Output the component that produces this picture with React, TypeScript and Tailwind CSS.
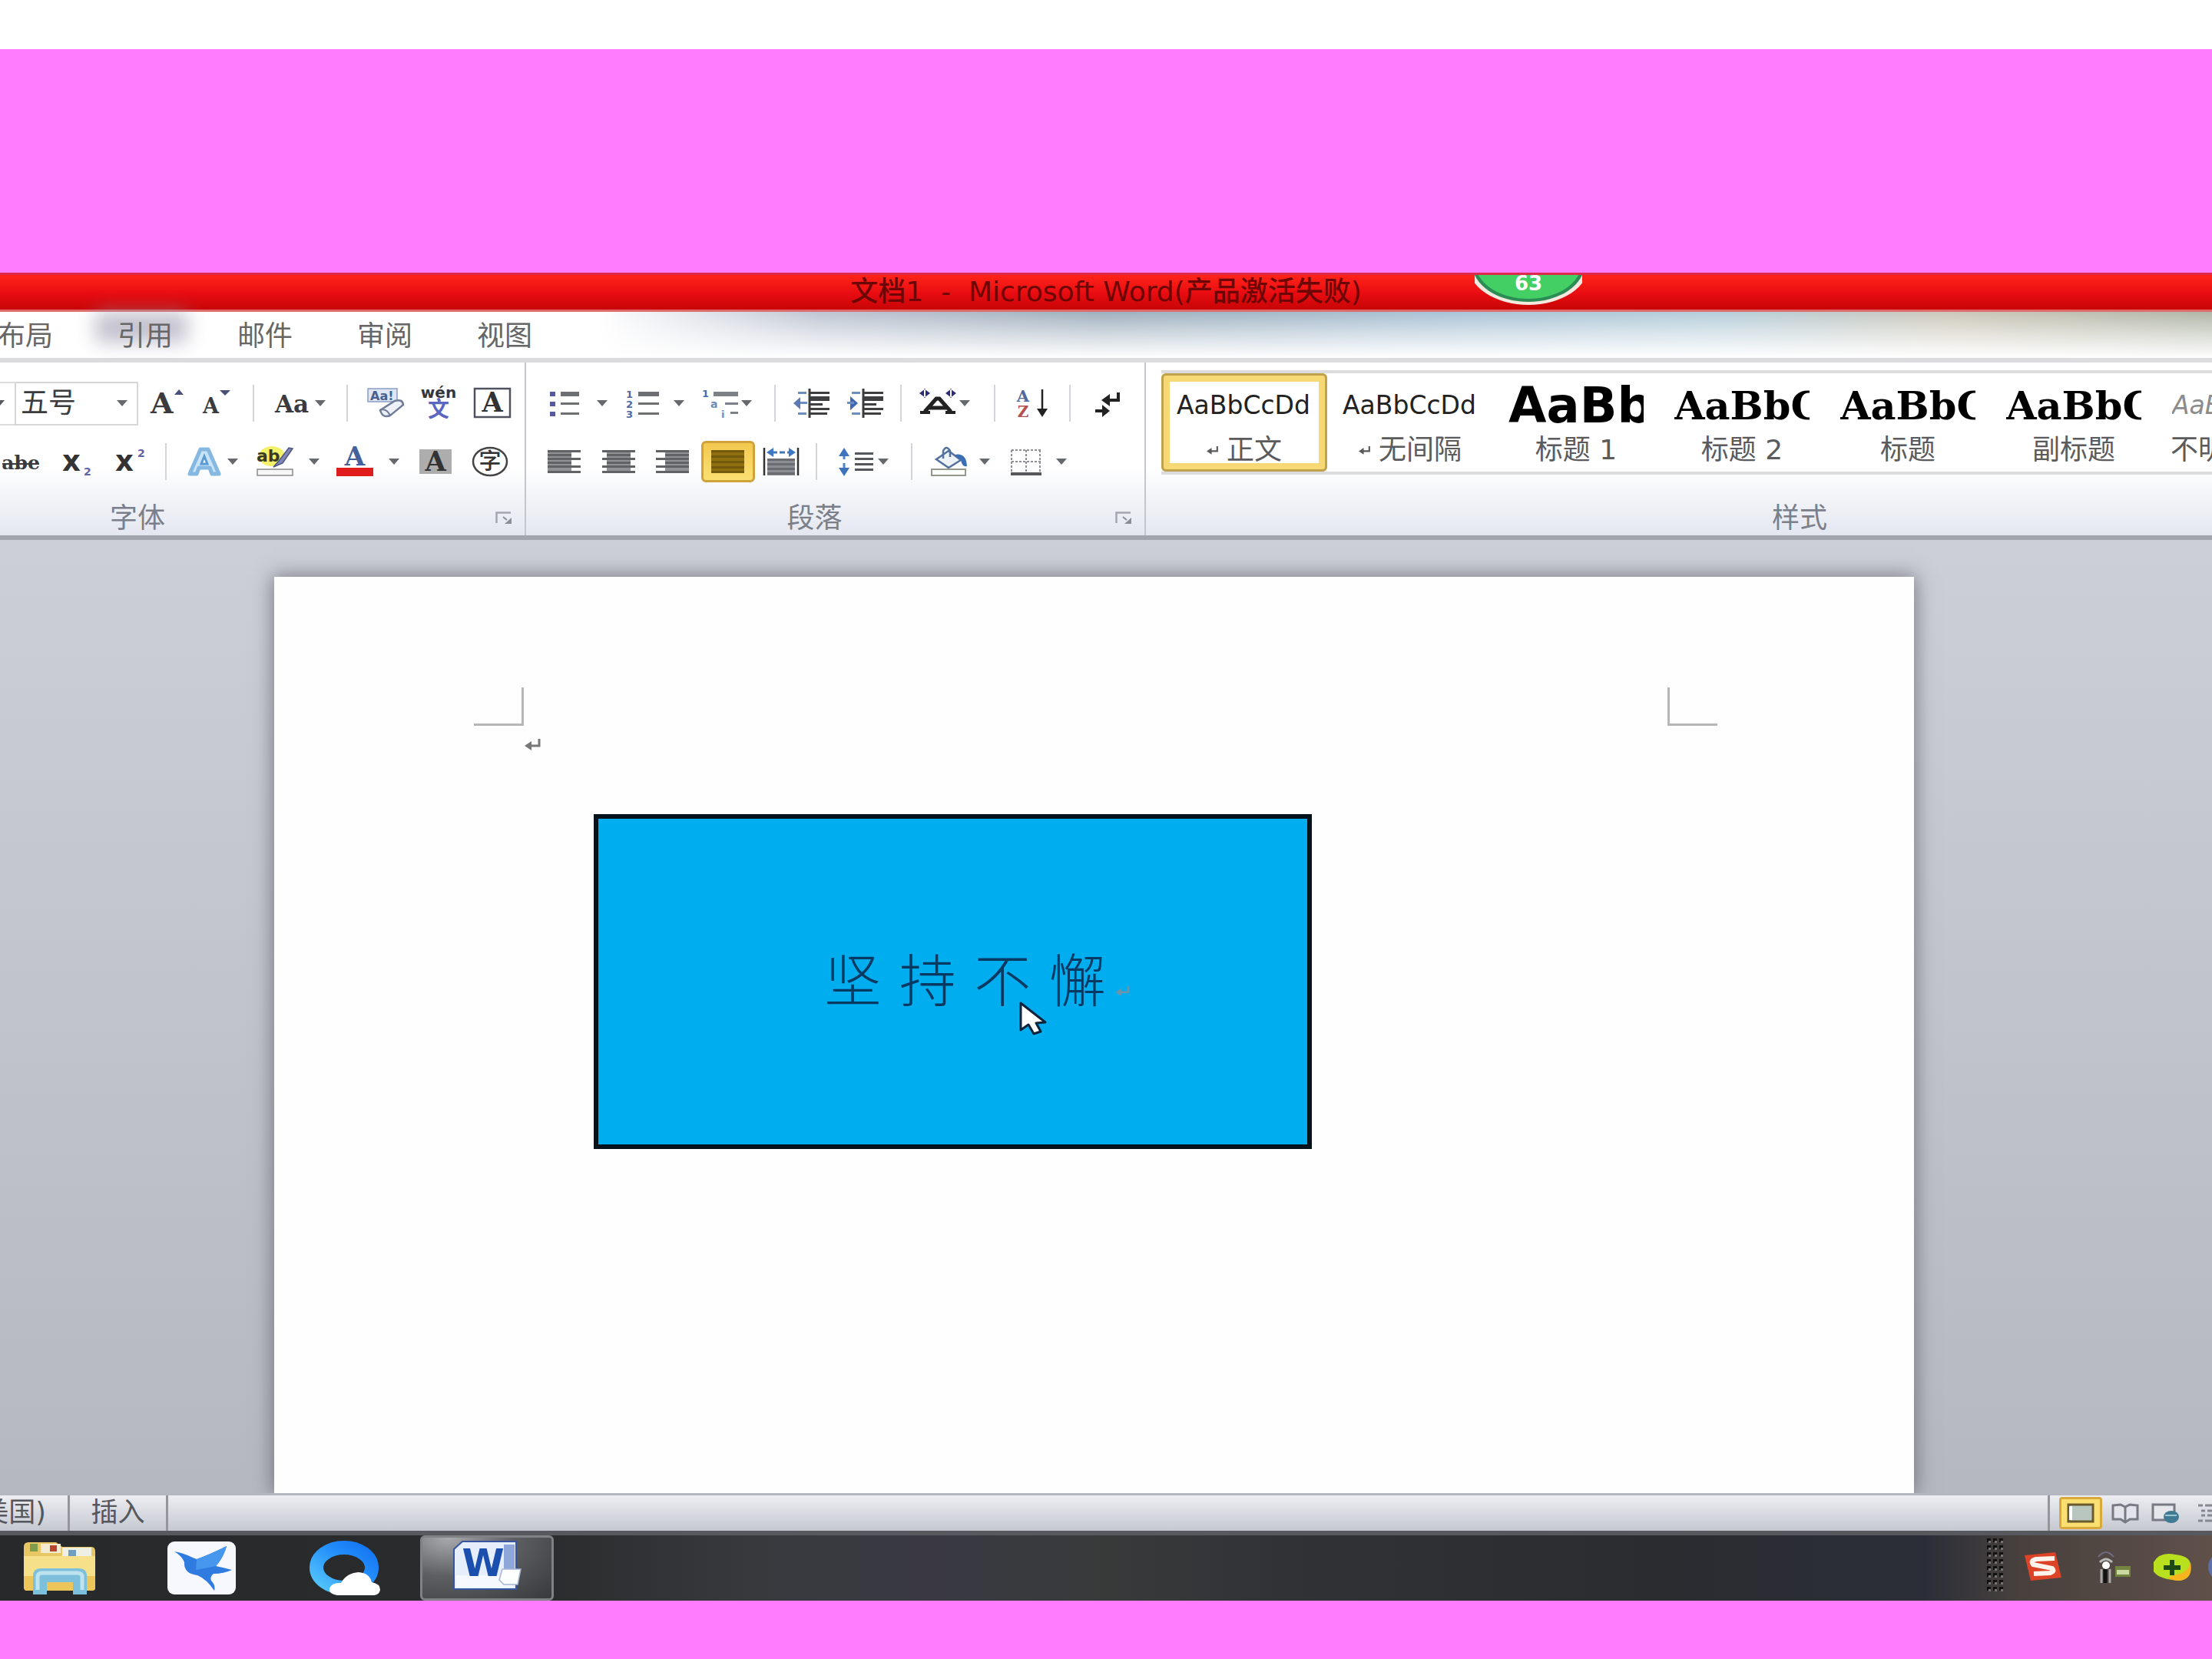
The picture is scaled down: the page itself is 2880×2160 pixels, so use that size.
import React from "react";

function classNames(...classes: (string | undefined | false)[]) {
  return classes.filter(Boolean).join(" ");
}

type IconProps = { children: React.ReactNode };

// all ribbon glyphs share the same 48x40 canvas
function Glyph({ children }: IconProps) {
  return (
    <svg viewBox="0 0 48 40" className="h-10 w-12 shrink-0 overflow-visible" aria-hidden={true}>
      {children}
    </svg>
  );
}

const serif = "'DejaVu Serif', serif";
const sans = "'DejaVu Sans', sans-serif";
const cjk = "'Noto Sans CJK SC', sans-serif";

function Caret() {
  return (
    <svg viewBox="0 0 14 8" className="h-2 w-3.5 shrink-0" aria-hidden={true}>
      <path d="M0 0H14L7 8Z" fill="#66696d" />
    </svg>
  );
}

function ReturnMark({ className }: { className: string }) {
  return (
    <svg viewBox="0 0 22 16" className={className} aria-hidden={true}>
      <path d="M19 1V10H6" fill="none" stroke="currentColor" strokeWidth="3" />
      <path d="M0 10L9 4V16Z" fill="currentColor" />
    </svg>
  );
}

function Sep() {
  return (
    <div className="flex w-6 shrink-0 justify-center">
      <div className="h-12 w-0.5 bg-[#d3d5da]" />
    </div>
  );
}

function Tool({
  label,
  className,
  menu,
  children,
}: {
  label: string;
  className: string;
  menu?: boolean;
  children: React.ReactNode;
}) {
  return (
    <button
      type="button"
      aria-label={label}
      className={classNames(
        "flex h-[54px] shrink-0 items-center",
        !menu && "justify-center",
        className,
      )}
    >
      <Glyph>{children}</Glyph>
      {menu && <Caret />}
    </button>
  );
}

function Lines({
  rows,
  color = "#77797c",
}: {
  rows: [number, number, number][];
  color?: string;
}) {
  return (
    <>
      {rows.map(([x, y, w]) => (
        <rect key={`${x}-${y}`} x={x} y={y} width={w} height="3" fill={color} />
      ))}
    </>
  );
}

function FontGroup() {
  return (
    <section className="flex w-[685px] shrink-0 flex-col border-r-2 border-[#c3c6cc] pt-[15px]">
      <div className="flex h-[76px] items-center">
        <div className="flex h-[57px] w-[19px] shrink-0 items-center border-y-2 border-[#dcdcde]">
          <svg viewBox="0 0 6 8" className="h-2 w-1.5" aria-hidden={true}>
            <path d="M0 0H6L0 7Z" fill="#55585c" />
          </svg>
        </div>
        <label className="relative block w-[161px] shrink-0">
          <select
            aria-label="字号"
            className="block h-[57px] w-full appearance-none border-2 border-[#d6d6d8] bg-white pl-1.5 text-[36px] leading-[50px] text-[#3c3c3c]"
          >
            <option>五号</option>
          </select>
          <span className="pointer-events-none absolute top-6 right-3.5">
            <Caret />
          </span>
        </label>
        <Tool label="增大字体" className="w-[74px]">
          <text x="3" y="33" fontFamily={serif} fontWeight="700" fontSize="38" fill="#3b3b3d">
            A
          </text>
          <path d="M34 9L40 2L46 9Z" fill="#4a5076" />
        </Tool>
        <Tool label="缩小字体" className="w-16">
          <text x="2" y="33" fontFamily={serif} fontWeight="700" fontSize="27" fill="#3b3b3d">
            A
          </text>
          <path d="M24 3H38L31 10Z" fill="#4a5076" />
        </Tool>
        <Sep />
        <Tool label="更改大小写" className="w-[98px] gap-1 pl-4" menu>
          <text x="0" y="32" fontFamily={serif} fontWeight="700" fontSize="31" fill="#3b3b3d">
            Aa
          </text>
        </Tool>
        <Sep />
        <Tool label="清除格式" className="w-[76px]">
          <path d="M1 1H39V18H1Z" fill="#dfe6f3" stroke="#8b9cc4" strokeWidth="1.5" />
          <text x="4" y="16" fontFamily={sans} fontWeight="700" fontSize="16" fill="#49608f">
            Aa!
          </text>
          <path
            d="M17 29L36 17Q46 14 47 22L30 36Q20 40 17 29Z"
            fill="#eef1f7"
            stroke="#707d99"
            strokeWidth="2.5"
          />
          <path d="M17 29Q25 26 30 36" fill="none" stroke="#707d99" strokeWidth="2" />
        </Tool>
        <Tool label="拼音指南" className="w-[62px]">
          <text x="24" y="13" textAnchor="middle" fontFamily={sans} fontWeight="700" fontSize="20" fill="#35353b">
            wén
          </text>
          <text x="24" y="38" textAnchor="middle" fontFamily={cjk} fontWeight="700" fontSize="28" fill="#5a66c0">
            文
          </text>
        </Tool>
        <Tool label="字符边框" className="w-[78px]">
          <rect x="1" y="1" width="46" height="37" fill="#fff" stroke="#50535f" strokeWidth="2.5" />
          <text x="24" y="31" textAnchor="middle" fontFamily={serif} fontWeight="700" fontSize="35" fill="#333">
            A
          </text>
        </Tool>
      </div>
      <div className="flex h-[76px] items-center">
        <Tool label="删除线" className="w-[54px]">
          <text x="24" y="30" textAnchor="middle" fontFamily={serif} fontWeight="700" fontSize="25" fill="#3b3b3d">
            abe
          </text>
          <path d="M0 23H48" stroke="#3b3b3d" strokeWidth="2" />
        </Tool>
        <Tool label="下标" className="w-[90px]">
          <text x="6" y="32" fontFamily={sans} fontWeight="700" fontSize="37" fill="#333">
            x
          </text>
          <text x="34" y="38" fontFamily={sans} fontWeight="700" fontSize="14" fill="#5c64a8">
            2
          </text>
        </Tool>
        <Tool label="上标" className="w-[60px]">
          <text x="0" y="32" fontFamily={sans} fontWeight="700" fontSize="37" fill="#333">
            x
          </text>
          <text x="29" y="14" fontFamily={sans} fontWeight="700" fontSize="14" fill="#5c64a8">
            2
          </text>
        </Tool>
        <Sep />
        <Tool label="文本效果" className="w-[90px] gap-1 pl-4" menu>
          <path
            d="M3 36L17 4H27L41 36H32L29 28H15L12 36Z"
            fill="#c9e4f8"
            stroke="#86b9e2"
            strokeWidth="5"
            strokeLinejoin="round"
          />
          <path d="M18 23L22 13L26 23Z" fill="#fff" stroke="#5b9bd3" strokeWidth="3" />
        </Tool>
        <Tool label="突出显示" className="w-26 gap-5 pl-4" menu>
          <ellipse cx="20" cy="13" rx="17" ry="13" fill="#f3f06a" />
          <text x="0" y="20" fontFamily={sans} fontWeight="700" fontSize="22" fill="#3a3a22">
            ab
          </text>
          <path d="M47 3L34 22L22 27L30 18L42 2Z" fill="#8087b4" stroke="#4f5682" strokeWidth="1.5" />
          <rect x="1" y="30" width="46" height="8" fill="#f7f7f7" stroke="#8b8b8b" strokeWidth="1.5" />
        </Tool>
        <Tool label="字体颜色" className="w-26 gap-5 pl-4" menu>
          <text x="24" y="25" textAnchor="middle" fontFamily={serif} fontWeight="700" fontSize="34" fill="#44619c">
            A
          </text>
          <rect x="0" y="28" width="48" height="11" fill="#e01c1c" />
        </Tool>
        <Tool label="字符底纹" className="w-20">
          <rect x="4" y="4" width="42" height="32" fill="#adadad" />
          <text x="25" y="32" textAnchor="middle" fontFamily={serif} fontWeight="700" fontSize="35" fill="#333">
            A
          </text>
        </Tool>
        <Tool label="带圈字符" className="w-16">
          <ellipse cx="24" cy="20" rx="22" ry="18" fill="#fff" stroke="#444" strokeWidth="2.5" />
          <text x="24" y="30" textAnchor="middle" fontFamily={cjk} fontWeight="500" fontSize="29" fill="#333">
            字
          </text>
        </Tool>
      </div>
      <GroupLabel text="字体" className="pl-[143px]" launcher />
    </section>
  );
}

function GroupLabel({
  text,
  className,
  launcher,
}: {
  text: string;
  className?: string;
  launcher?: boolean;
}) {
  return (
    <div
      className={classNames(
        "mt-3.5 flex h-[44px] items-center gap-4 text-[36px] leading-[44px] text-[#7b7f8a]",
        className,
      )}
    >
      <h2 className="flex-1">{text}</h2>
      {launcher && (
        <button type="button" aria-label={`${text}对话框`} className="mr-4">
          <svg viewBox="0 0 22 18" className="h-[18px] w-[22px]">
            <path d="M1.5 15V1.5H20" fill="none" stroke="#a3a6ae" strokeWidth="2.5" />
            <path d="M10 7L15 11" stroke="#8b8e96" strokeWidth="2" />
            <path d="M12 16H21V8Z" fill="#8b8e96" />
          </svg>
        </button>
      )}
    </div>
  );
}

const indentBars: [number, number, number][] = [
  [22, 5, 25],
  [22, 11, 25],
  [22, 14, 25],
  [22, 20, 16],
  [22, 26, 25],
  [22, 32, 22],
];

function ParagraphGroup() {
  return (
    <section className="flex w-[807px] shrink-0 flex-col border-r-2 border-[#c3c6cc] pt-[15px]">
      <div className="flex h-[76px] items-center pl-3">
        <Tool label="项目符号" className="w-25 gap-4 pl-4" menu>
          <rect x="3" y="5" width="7" height="6" fill="#56599c" />
          <rect x="3" y="18" width="7" height="6" fill="#56599c" />
          <rect x="3" y="31" width="7" height="6" fill="#56599c" />
          <Lines rows={[[17, 5, 24], [17, 8, 24], [17, 19, 24], [17, 32, 24]]} color="#6d6f72" />
        </Tool>
        <Tool label="编号" className="w-25 gap-4 pl-4" menu>
          <text x="2" y="13" fontFamily={sans} fontWeight="700" fontSize="13" fill="#4c6aa6">
            1
          </text>
          <text x="2" y="26" fontFamily={sans} fontWeight="700" fontSize="13" fill="#4c6aa6">
            2
          </text>
          <text x="2" y="39" fontFamily={sans} fontWeight="700" fontSize="13" fill="#4c6aa6">
            3
          </text>
          <Lines rows={[[18, 5, 27], [18, 8, 27], [18, 19, 27], [18, 32, 27]]} color="#6d6f72" />
        </Tool>
        <Tool label="多级列表" className="w-25 gap-1 pl-4" menu>
          <text x="1" y="12" fontFamily={sans} fontWeight="700" fontSize="13" fill="#4c6aa6">
            1
          </text>
          <text x="12" y="26" fontFamily={sans} fontWeight="700" fontSize="14" fill="#6a8cbc">
            a
          </text>
          <text x="26" y="39" fontFamily={sans} fontWeight="700" fontSize="13" fill="#6a8cbc">
            i
          </text>
          <Lines rows={[[16, 5, 32], [16, 8, 32], [31, 19, 17], [38, 31, 10]]} color="#7d8086" />
        </Tool>
        <Sep />
        <Tool label="减少缩进量" className="w-[72px]">
          <path d="M0 20L9 12V28Z" fill="#5c79b2" />
          <Lines rows={[[6, 5, 11], [9, 18, 9], [6, 32, 11]]} color="#6d8fc0" />
          <path d="M21 1V39" stroke="#3c3c3c" strokeWidth="3" />
          <Lines rows={indentBars} color="#3f3f41" />
        </Tool>
        <Tool label="增加缩进量" className="w-17">
          <path d="M14 20L4 11V29Z" fill="#3f68b4" />
          <Lines rows={[[6, 5, 11], [0, 18, 9], [6, 32, 11]]} color="#6d8fc0" />
          <path d="M21 1V39" stroke="#3c3c3c" strokeWidth="3" />
          <Lines rows={indentBars} color="#3f3f41" />
        </Tool>
        <Sep />
        <Tool label="中文版式" className="w-[98px] gap-1 pl-3" menu>
          <path d="M1 32H14M34 32H47" stroke="#222" strokeWidth="4" />
          <path d="M7 31L22 14H26L41 31M13 26H35" fill="none" stroke="#222" strokeWidth="5" />
          <path d="M0 7L8 1V13ZM14 7L6 1V13Z" fill="#2c2c74" />
          <path d="M34 7L42 1V13ZM48 7L40 1V13Z" fill="#2c2c74" />
        </Tool>
        <Sep />
        <Tool label="排序" className="w-[74px]">
          <text x="12" y="18" textAnchor="middle" fontFamily={serif} fontWeight="700" fontSize="21" fill="#53689f">
            A
          </text>
          <text x="12" y="38" textAnchor="middle" fontFamily={serif} fontWeight="700" fontSize="20" fill="#b4504e">
            Z
          </text>
          <path d="M37 2V34" stroke="#222" strokeWidth="2.5" />
          <path d="M30 27H44L37 38Z" fill="#222" />
        </Tool>
        <Sep />
        <Tool label="显示编辑标记" className="w-[76px]">
          <path d="M37 6V16H22" fill="none" stroke="#222" strokeWidth="4" />
          <path d="M15 16L26 8V24Z" fill="#222" />
          <path d="M7 30H18" stroke="#222" strokeWidth="4" />
          <path d="M26 30L16 22V38Z" fill="#222" />
        </Tool>
      </div>
      <div className="flex h-[76px] items-center pl-3">
        <Tool label="左对齐" className="w-[76px]">
          <rect x="2" y="5" width="31" height="30" fill="#909296" />
          <Lines rows={[[2, 5, 43], [2, 10, 31], [2, 15, 43], [2, 20, 31], [2, 25, 43], [2, 32, 43]]} color="#606266" />
        </Tool>
        <Tool label="居中" className="w-[66px]">
          <rect x="8" y="5" width="31" height="30" fill="#909296" />
          <Lines rows={[[2, 5, 43], [8, 10, 31], [2, 15, 43], [8, 20, 31], [2, 25, 43], [2, 32, 43]]} color="#606266" />
        </Tool>
        <Tool label="右对齐" className="w-[74px]">
          <rect x="14" y="5" width="31" height="30" fill="#909296" />
          <Lines rows={[[2, 5, 43], [14, 10, 31], [2, 15, 43], [14, 20, 31], [2, 25, 43], [2, 32, 43]]} color="#606266" />
        </Tool>
        <Tool
          label="两端对齐"
          className="w-[70px] rounded-md border-3 border-[#cfa23a] bg-linear-to-b from-[#f3c94f] to-[#fbe072]"
        >
          <rect x="2" y="5" width="43" height="30" fill="#8f7010" />
          <Lines rows={[[2, 5, 43], [2, 12, 43], [2, 19, 43], [2, 26, 43], [2, 32, 43]]} color="#735a0c" />
        </Tool>
        <Tool label="分散对齐" className="w-17">
          <path d="M2 2V38M46 2V38" stroke="#333" strokeWidth="2.5" />
          <path d="M5 8L14 2V14ZM43 8L34 2V14Z" fill="#3f78c2" />
          <path d="M12 8H36" stroke="#3f78c2" strokeWidth="3" strokeDasharray="7 3" />
          <rect x="6" y="16" width="36" height="22" fill="#8b8e92" />
          <Lines rows={[[6, 16, 36], [6, 22, 36], [6, 28, 36], [6, 34, 36]]} color="#6a6c70" />
        </Tool>
        <Sep />
        <Tool label="行距" className="w-25 gap-1 pl-4" menu>
          <path d="M8 10V30" stroke="#4f86c8" strokeWidth="3" strokeDasharray="7 5" />
          <path d="M1 13L8 2L15 13ZM1 28L8 39L15 28Z" fill="#3f74bd" />
          <Lines rows={[[22, 8, 24], [22, 15, 24], [22, 22, 24], [22, 29, 24]]} color="#55575a" />
        </Tool>
        <Sep />
        <Tool label="底纹" className="w-25 gap-4 pl-3" menu>
          <path d="M8 17L24 6L40 18L24 28Z" fill="#eef3f8" stroke="#52719d" strokeWidth="2.5" />
          <path d="M17 16V6Q21 -2 26 6V14" fill="none" stroke="#52719d" strokeWidth="2.5" />
          <path d="M32 11Q47 8 48 26Q42 28 40 18Z" fill="#3a6fb5" />
          <rect x="2" y="30" width="44" height="8" fill="#fbfdf8" stroke="#96988e" strokeWidth="2" />
        </Tool>
        <Tool label="边框" className="w-25 gap-4 pl-3" menu>
          <path
            d="M6 5H44M6 20H44M6 5V34M25 5V34M43 5V34"
            fill="none"
            stroke="#8f9196"
            strokeWidth="2"
            strokeDasharray="3 2"
          />
          <path d="M5 36H45" stroke="#55575a" strokeWidth="4" />
        </Tool>
      </div>
      <GroupLabel text="段落" className="text-center" launcher />
    </section>
  );
}

const styles = [
  { name: "正文", sample: "AaBbCcDd", look: "text-[33px] text-[#222]", mark: true },
  { name: "无间隔", sample: "AaBbCcDd", look: "text-[33px] text-[#222]", mark: true },
  { name: "标题 1", sample: "AaBb", look: "text-[64px] font-bold text-black" },
  { name: "标题 2", sample: "AaBbC", look: "font-['DejaVu_Serif',serif] text-[51px] font-bold text-black" },
  { name: "标题", sample: "AaBbC", look: "font-['DejaVu_Serif',serif] text-[51px] font-bold text-black" },
  { name: "副标题", sample: "AaBbC", look: "font-['DejaVu_Serif',serif] text-[51px] font-bold text-black" },
  { name: "不明显强调", sample: "AaBbCcDd", look: "text-[33px] text-[#8c8c8c] italic" },
];

function StylesGroup() {
  return (
    <section className="flex min-w-0 flex-1 flex-col overflow-hidden pt-2.5 pl-[20px]">
      <div className="flex h-[136px] border-y-4 border-[#dcdcdf] bg-white">
        {styles.map((style, index) => (
          <button
            key={style.name}
            type="button"
            className={classNames(
              "flex w-54 shrink-0 flex-col items-center pt-0.5",
              index === 0 &&
                "rounded-md shadow-[inset_0_0_0_3px_#bfa24c,inset_0_0_0_11px_#f6d974]",
            )}
          >
            <span
              className={classNames(
                "block h-20 w-44 overflow-hidden text-left leading-[80px] whitespace-nowrap",
                style.look,
              )}
            >
              {style.sample}
            </span>
            <span className="flex items-center gap-2.5 text-[36px] leading-9 whitespace-nowrap text-[#5b5b5e]">
              {style.mark && <ReturnMark className="h-3.5 w-4" />}
              {style.name}
            </span>
          </button>
        ))}
      </div>
      <GroupLabel text="样式" className="mt-[35px] pl-[795px]" />
    </section>
  );
}

function TitleBar() {
  return (
    <header className="relative h-[51px] shrink-0 overflow-hidden border-t-3 border-b-3 border-t-[#dd2a4c] border-b-[#df6a6c] bg-linear-to-b from-[#ff2318] via-[#ea0d12] to-[#c80506]">
      <h1 className="text-center text-[36px] leading-[43px] font-medium whitespace-pre text-[#6d0505]">
        {"文档1  -  Microsoft Word(产品激活失败)"}
      </h1>
      <svg
        viewBox="0 0 140 44"
        className="absolute top-0 left-[1920px] h-11 w-35"
        aria-hidden={true}
      >
        <ellipse cx="70" cy="-14" rx="79" ry="53" fill="#f5e9df" />
        <ellipse cx="70" cy="-14" rx="73" ry="49" fill="#2c8c56" />
        <ellipse cx="70" cy="-15" rx="69" ry="46" fill="#43cf63" />
        <text x="70" y="20" textAnchor="middle" fontFamily={sans} fontWeight="700" fontSize="26" fill="#fff">
          63
        </text>
      </svg>
    </header>
  );
}

const tabs = ["引用", "邮件", "审阅", "视图"];

function Tabs() {
  return (
    <div className="shrink-0 bg-[linear-gradient(90deg,#fff_0%,#fff_27%,#b4bccb_37%,#8fa2b2_50%,#9db9cf_66%,#abc6d4_78%,#c4bfae_88%,#a3a998_100%)]">
      <nav className="relative flex h-[66px] items-center gap-[84px] border-b-6 border-[#dcdcdf] bg-linear-to-b from-white/15 via-white/60 to-white pt-1 text-[36px] leading-[56px] text-[#666]">
        <div className="absolute top-0 left-[124px] h-10 w-30 bg-[#9b97ab]/60 blur-md" />
        <a href="#layout" className="flex w-[69px] shrink-0 justify-end overflow-hidden whitespace-nowrap">
          页面布局
        </a>
        {tabs.map((tab) => (
          <a key={tab} href={`#${tab}`} className="relative shrink-0">
            {tab}
          </a>
        ))}
      </nav>
    </div>
  );
}

function DocumentArea() {
  return (
    <main className="flex flex-1 flex-col overflow-hidden border-t-6 border-[#a2a5ae] bg-linear-to-b from-[#cccfd8] to-[#b5b8c1] pt-12 pr-[388px] pl-[357px]">
      <article className="flex-1 bg-[#fefefe] shadow-[0_0_24px_2px_rgba(70,72,78,0.6)]">
        <div className="flex justify-between pt-36 pr-[256px] pl-[260px]">
          <div className="h-[50px] w-[65px] border-r-3 border-b-3 border-[#b6b6b6]" />
          <div className="h-[50px] w-[65px] border-b-3 border-l-3 border-[#b6b6b6]" />
        </div>
        <p className="pt-4 pl-[326px] text-[#777]">
          <ReturnMark className="h-4 w-[22px]" />
        </p>
        <div className="relative mt-[83px] ml-[416px] flex h-[436px] w-[935px] items-center justify-center gap-3 border-6 border-[#04121c] bg-[#00adef] pl-16">
          <p className="font-['DejaVu_Sans','Noto_Sans_CJK_SC',sans-serif] text-[74px] leading-[96px] font-light text-[#063a63]">
            坚 持 不 懈
          </p>
          <ReturnMark className="mt-6 h-3.5 w-5 text-[#6f93a8]" />
          {/* mouse pointer */}
          <svg
            viewBox="0 0 36 44"
            className="absolute top-[238px] left-[548px] h-11 w-9"
            aria-hidden={true}
          >
            <path
              d="M2 2V37L12 30L19 42L28 39L22 28L34 27Z"
              fill="#fff"
              stroke="#10233c"
              strokeWidth="3"
              strokeLinejoin="round"
            />
          </svg>
        </div>
      </article>
    </main>
  );
}

function StatusBar() {
  return (
    <div className="flex h-[49px] shrink-0 items-stretch overflow-hidden border-t-3 border-[#b4b7bf] bg-linear-to-b from-[#eceef2] to-[#c6c8d1] text-[35px] leading-[44px] text-[#55575c]">
      <div className="flex w-[91px] shrink-0 justify-end overflow-hidden border-r-3 border-[#94969c] pr-7 whitespace-nowrap">
        英语(美国)
      </div>
      <div className="flex w-32 shrink-0 justify-center border-r-3 border-[#94969c]">
        插入
      </div>
      <div className="flex-1" />
      <div className="flex w-[214px] items-center border-l-3 border-[#94969c] pl-3">
        <button
          type="button"
          aria-label="页面视图"
          className="flex h-[42px] w-14 shrink-0 items-center justify-center rounded-sm border-3 border-[#d9a93c] bg-[#fbdf70]"
        >
          <svg viewBox="0 0 36 26" className="h-[26px] w-9">
            <rect x="2" y="2" width="32" height="22" fill="#b9c6bf" stroke="#6a5a2c" strokeWidth="3" />
            <path d="M5 4V22" stroke="#fff" strokeWidth="4" />
          </svg>
        </button>
        <button type="button" aria-label="阅读版式" className="ml-3 shrink-0">
          <svg viewBox="0 0 36 28" className="h-7 w-9">
            <path
              d="M2 4L12 3L18 6L24 3L34 4V22H24L18 26L12 22H2Z"
              fill="#e3e4e9"
              stroke="#777983"
              strokeWidth="3"
            />
            <path d="M18 6V25" stroke="#777983" strokeWidth="3" />
          </svg>
        </button>
        <button type="button" aria-label="Web 版式" className="ml-4 shrink-0">
          <svg viewBox="0 0 36 28" className="h-7 w-9">
            <rect x="2" y="3" width="28" height="20" fill="#e6e7ea" stroke="#777983" strokeWidth="3" />
            <ellipse cx="26" cy="19" rx="10" ry="8" fill="#417a93" />
            <path d="M18 17H33" stroke="#9cc6cf" strokeWidth="2" />
          </svg>
        </button>
        <button type="button" aria-label="大纲视图" className="ml-6 shrink-0">
          <svg viewBox="0 0 36 28" className="h-7 w-9">
            <path d="M1 4H7M10 4H34M5 11H10M13 11H34M5 17H10M13 17H34M1 24H7M10 24H34" stroke="#85878f" strokeWidth="3" />
          </svg>
        </button>
      </div>
    </div>
  );
}

function FolderIcon() {
  return (
    <svg viewBox="0 0 96 72" className="h-[72px] w-24" aria-hidden={true}>
      <path d="M2 8Q2 2 8 2H44L52 8H90Q95 8 95 14V60H2Z" fill="#e9c765" />
      <path d="M10 4H20V14H10Z" fill="#7f9c4a" />
      <path d="M24 4H50V16H24Z" fill="#f3ead0" />
      <path d="M36 6H45V14H36Z" fill="#b5452c" />
      <path d="M52 9H90V20H52Z" fill="#eef0e6" />
      <path d="M60 12H70V20H60Z" fill="#6f9fc0" />
      <path d="M2 20H95V62Q95 65 90 65H6Q2 65 2 60Z" fill="#f6e08a" />
      <path d="M2 46H95V60Q95 65 90 65H6Q2 65 2 60Z" fill="#ecc65a" />
      <path d="M14 70V46Q14 36 24 36H74Q84 36 84 46V70H66V54H32V70Z" fill="#7cc0dc" />
      <path d="M20 64V47Q20 42 26 42H72Q78 42 78 47V64" fill="none" stroke="#bfe3ee" strokeWidth="5" />
    </svg>
  );
}

function BirdIcon() {
  return (
    <svg viewBox="0 0 96 72" className="h-[72px] w-24" aria-hidden={true}>
      <rect x="3" y="1" width="89" height="69" rx="9" fill="#f7f8fd" />
      <path
        d="M12 14Q24 16 36 22L41 24Q58 18 80 7Q76 22 66 33Q76 35 87 38Q76 43 63 43Q58 47 60 52Q66 58 64 65Q54 50 42 45Q24 43 25 28Q22 20 12 14Z"
        fill="#2f7be0"
      />
      <path d="M41 24Q58 18 80 7Q76 22 66 33L40 38Z" fill="#4797ee" />
    </svg>
  );
}

function BrowserIcon() {
  return (
    <svg viewBox="0 0 96 72" className="h-[72px] w-24" aria-hidden={true}>
      <defs>
        <linearGradient id="ring" x1="0" y1="1" x2="1" y2="0">
          <stop offset="0" stopColor="#56c6fb" />
          <stop offset="0.6" stopColor="#2490fb" />
          <stop offset="1" stopColor="#1474f2" />
        </linearGradient>
      </defs>
      <ellipse cx="47" cy="35" rx="36" ry="26" fill="none" stroke="url(#ring)" strokeWidth="18" />
      <path
        d="M34 70Q27 68 28 62Q31 54 43 55Q50 42 66 41Q80 42 83 54Q94 56 94 64Q93 70 86 71H38Z"
        fill="#fff"
      />
    </svg>
  );
}

function WordIcon() {
  return (
    <svg viewBox="0 0 92 70" className="h-[70px] w-23" aria-hidden={true}>
      <path d="M3 12L14 2H84V64H3Z" fill="#e6eefb" stroke="#35559c" strokeWidth="2" />
      <path d="M68 6H82V42H68Z" fill="#8fa6da" />
      <path d="M6 46H80V62H6Z" fill="#f5f8fe" />
      <path d="M66 38H90L86 58H68L62 52Z" fill="#fdfefe" stroke="#a4b5d4" strokeWidth="1.5" />
      <text x="41" y="47" textAnchor="middle" fontFamily={sans} fontWeight="700" fontSize="50" fill="#1b4fae">
        W
      </text>
    </svg>
  );
}

function Taskbar() {
  return (
    <footer className="flex h-[91px] shrink-0 items-stretch overflow-hidden border-t-6 border-[#57595f] bg-[linear-gradient(90deg,#27292a_0%,#2a2b2c_24%,#38393d_34%,#3a3943_42%,#383a3a_50%,#303236_58%,#2b2c30_75%,#2b2e38_87%,#46403d_91%,#60504a_100%)]">
      <div className="flex items-center gap-[50px] pl-[29px]">
        <div className="flex gap-[90px]">
          <button type="button" aria-label="资源管理器">
            <FolderIcon />
          </button>
          <button type="button" aria-label="迅雷">
            <BirdIcon />
          </button>
          <button type="button" aria-label="浏览器">
            <BrowserIcon />
          </button>
        </div>
        <button
          type="button"
          aria-label="Word"
          className="flex h-full w-[174px] items-center justify-center rounded-md border-3 border-[#7f8184] bg-[radial-gradient(ellipse_at_20%_0%,#a9aaad_0%,#5e5f62_45%,#38393b_100%)] pb-1"
        >
          <WordIcon />
        </button>
      </div>
      <div className="flex-1" />
      <div className="flex w-[294px] shrink-0 items-center overflow-hidden pb-1">
        <svg viewBox="0 0 24 75" className="h-[75px] w-6 shrink-0" aria-hidden={true}>
          {[1, 10, 19, 28, 37, 46, 55, 64].map((y) =>
            [1, 9, 17].map((x) => (
              <g key={`${x}-${y}`}>
                <rect x={x} y={y} width="5" height="5" fill="#111" />
                <rect x={x + 2} y={y + 3} width="3" height="3" fill="#777370" />
              </g>
            )),
          )}
        </svg>
        <svg viewBox="0 0 52 40" className="ml-6 h-10 w-13 shrink-0" aria-hidden={true}>
          <path d="M2 5L42 1L50 34L10 38Z" fill="#dd4427" />
          <path
            d="M41 9L17 10Q9 12 13 17L38 22Q42 26 35 28L14 29"
            fill="none"
            stroke="#fff4ec"
            strokeWidth="6"
          />
        </svg>
        <svg viewBox="0 0 48 46" className="ml-11 h-[46px] w-12 shrink-0" aria-hidden={true}>
          <path d="M2 10Q12 -2 22 10" fill="none" stroke="#6f6b80" strokeWidth="2" />
          <path d="M4 17Q12 9 20 17" fill="none" stroke="#b9b9b9" strokeWidth="3" />
          <circle cx="12" cy="21" r="5" fill="#fff" />
          <path d="M6 26V44M17 26V44" stroke="#a8a8a8" strokeWidth="3" />
          <path d="M11 26V44" stroke="#111" strokeWidth="5" />
          <rect x="24" y="22" width="20" height="14" fill="#728440" />
          <rect x="26" y="27" width="16" height="6" fill="#c9d9a0" />
        </svg>
        <svg viewBox="0 0 52 40" className="ml-6 h-10 w-13 shrink-0" aria-hidden={true}>
          <path d="M2 14Q10 0 30 4Q50 6 50 18Q50 36 36 38Q8 36 2 26Z" fill="#b9e01f" />
          <path d="M32 30Q46 28 50 14Q54 36 36 38Q26 38 20 34Z" fill="#f6b51e" />
          <path d="M26 11V31M15 21H37" stroke="#1d4a12" strokeWidth="6" />
        </svg>
        <svg viewBox="0 0 40 40" className="ml-5 h-10 w-10 shrink-0" aria-hidden={true}>
          <circle cx="20" cy="20" r="19" fill="#5c6fa8" />
        </svg>
      </div>
    </footer>
  );
}

export default function App() {
  return (
    <div className="flex min-h-screen flex-col overflow-hidden bg-[#fe7cfd] font-['DejaVu_Sans','Noto_Sans_CJK_SC',sans-serif]">
      <div className="h-16 shrink-0 bg-white" />
      <div className="h-[291px] shrink-0" />
      <TitleBar />
      <Tabs />
      <div className="flex h-[225px] shrink-0 bg-linear-to-b from-white from-60% to-[#e4e7f0]">
        <FontGroup />
        <ParagraphGroup />
        <StylesGroup />
      </div>
      <DocumentArea />
      <StatusBar />
      <Taskbar />
      <div className="h-[76px] shrink-0" />
    </div>
  );
}
